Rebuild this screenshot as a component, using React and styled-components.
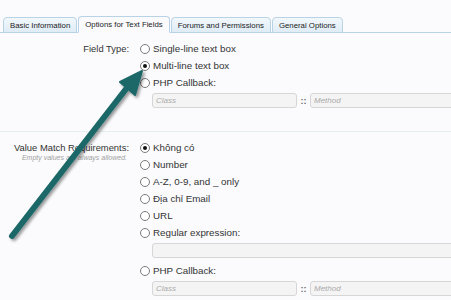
import React from "react";
import styled, { createGlobalStyle } from "styled-components";

const GlobalStyle = createGlobalStyle`
  html, body {
    margin: 0;
    padding: 0;
    background: #fbfbfd;
    overflow: hidden;
  }
  body {
    font-family: "Liberation Sans", Arial, sans-serif;
    color: #333;
  }
`;

const Page = styled.div`
  position: relative;
  width: 451px;
  height: 300px;
  overflow: hidden;
  padding-top: 15px;
  box-sizing: border-box;
`;

const Tabs = styled.div`
  display: flex;
  align-items: flex-end;
  padding-left: 3px;
  border-bottom: 1px solid #b9d3e6;
  height: 17px;
`;

const Tab = styled.div`
  height: ${(p) => (p.$active ? "17px" : "16px")};
  box-sizing: border-box;
  padding: 0 6px;
  margin-right: 1px;
  margin-bottom: -1px;
  display: flex;
  align-items: center;
  font-size: 7.8px;
  color: #222;
  border: 1px solid #b9d3e6;
  border-bottom: ${(p) => (p.$active ? "1px solid #fbfbfd" : "1px solid #b9d3e6")};
  border-radius: 4px 4px 0 0;
  background: ${(p) =>
    p.$active ? "#fbfbfd" : "linear-gradient(#f2f8fc, #dfecf6)"};
`;

const Section = styled.div`
  display: grid;
  grid-template-columns: 133px 1fr;
  column-gap: 7px;
  padding-top: ${(p) => p.$top}px;
  padding-bottom: ${(p) => p.$bottom}px;
  border-bottom: ${(p) => (p.$rule ? "1px solid #e4f0f0" : "none")};
`;

const LabelCol = styled.div`
  text-align: right;
  padding-right: 4px;
`;

const Label = styled.div`
  font-size: 9.4px;
  line-height: 17px;
  color: #333;
`;

const Hint = styled.div`
  font-size: 7px;
  font-style: italic;
  color: #a0a0a0;
  line-height: 8px;
  margin-top: -2px;
  padding-right: 2px;
`;

const Controls = styled.div`
  display: flex;
  flex-direction: column;
`;

const Option = styled.label`
  display: flex;
  align-items: center;
  height: 17px;
  gap: 3px;
  font-size: 9.8px;
  color: #333;
`;

const Radio = styled.span`
  width: 10px;
  height: 10px;
  box-sizing: border-box;
  border-radius: 50%;
  border: 1px solid #7a7a7a;
  background: #fff;
  display: flex;
  align-items: center;
  justify-content: center;
  flex-shrink: 0;
  &::after {
    content: "";
    display: ${(p) => (p.$checked ? "block" : "none")};
    width: 4px;
    height: 4px;
    border-radius: 50%;
    background: #111;
  }
`;

const InputRow = styled.div`
  display: flex;
  align-items: center;
  margin: 2px 0 ${(p) => p.$after || 0}px 12px;
`;

const Field = styled.div`
  width: ${(p) => p.$w}px;
  height: 15px;
  box-sizing: border-box;
  flex-shrink: 0;
  border: 1px solid #d6d6d6;
  border-radius: 3px;
  background: #f4f4f4;
  font-size: 8px;
  font-style: italic;
  color: #aaa;
  padding-left: 3px;
  display: flex;
  align-items: center;
`;

const Sep = styled.span`
  width: 13px;
  text-align: center;
  font-size: 9px;
  color: #666;
  font-weight: bold;
  flex-shrink: 0;
`;

const ArrowLayer = styled.svg`
  position: absolute;
  left: 0;
  top: 0;
  pointer-events: none;
`;

const Callback = ({ after }) => (
  <InputRow $after={after}>
    <Field $w={145}>Class</Field>
    <Sep>::</Sep>
    <Field $w={160}>Method</Field>
  </InputRow>
);

export default function App() {
  return (
    <Page>
      <GlobalStyle />
      <Tabs>
        <Tab>Basic Information</Tab>
        <Tab $active>Options for Text Fields</Tab>
        <Tab>Forums and Permissions</Tab>
        <Tab>General Options</Tab>
      </Tabs>

      <Section $top={7} $bottom={23} $rule>
        <LabelCol>
          <Label>Field Type:</Label>
        </LabelCol>
        <Controls>
          <Option>
            <Radio />
            Single-line text box
          </Option>
          <Option>
            <Radio $checked />
            Multi-line text box
          </Option>
          <Option>
            <Radio />
            PHP Callback:
          </Option>
          <Callback />
        </Controls>
      </Section>

      <Section $top={7} $bottom={0}>
        <LabelCol>
          <Label>Value Match Requirements:</Label>
          <Hint>Empty values are always allowed.</Hint>
        </LabelCol>
        <Controls>
          <Option>
            <Radio $checked />
            Không có
          </Option>
          <Option>
            <Radio />
            Number
          </Option>
          <Option>
            <Radio />
            A-Z, 0-9, and _ only
          </Option>
          <Option>
            <Radio />
            Địa chỉ Email
          </Option>
          <Option>
            <Radio />
            URL
          </Option>
          <Option>
            <Radio />
            Regular expression:
          </Option>
          <InputRow $after={4}>
            <Field $w={320} />
          </InputRow>
          <Option>
            <Radio />
            PHP Callback:
          </Option>
          <Callback />
        </Controls>
      </Section>

      <ArrowLayer width="451" height="300" viewBox="0 0 451 300">
        <defs>
          <filter id="sh" x="-20%" y="-20%" width="140%" height="140%">
            <feGaussianBlur in="SourceAlpha" stdDeviation="1.5" />
            <feOffset dx="2" dy="2" />
            <feComponentTransfer>
              <feFuncA type="linear" slope="0.4" />
            </feComponentTransfer>
            <feMerge>
              <feMergeNode />
              <feMergeNode in="SourceGraphic" />
            </feMerge>
          </filter>
        </defs>
        <g filter="url(#sh)" fill="#1d6868" stroke="#1d6868">
          <line
            x1="12"
            y1="236"
            x2="126"
            y2="89"
            strokeWidth="6"
            strokeLinecap="round"
          />
          <polygon
            points="142,71 120,82 135,95"
            strokeWidth="2"
            strokeLinejoin="round"
          />
        </g>
      </ArrowLayer>
    </Page>
  );
}
